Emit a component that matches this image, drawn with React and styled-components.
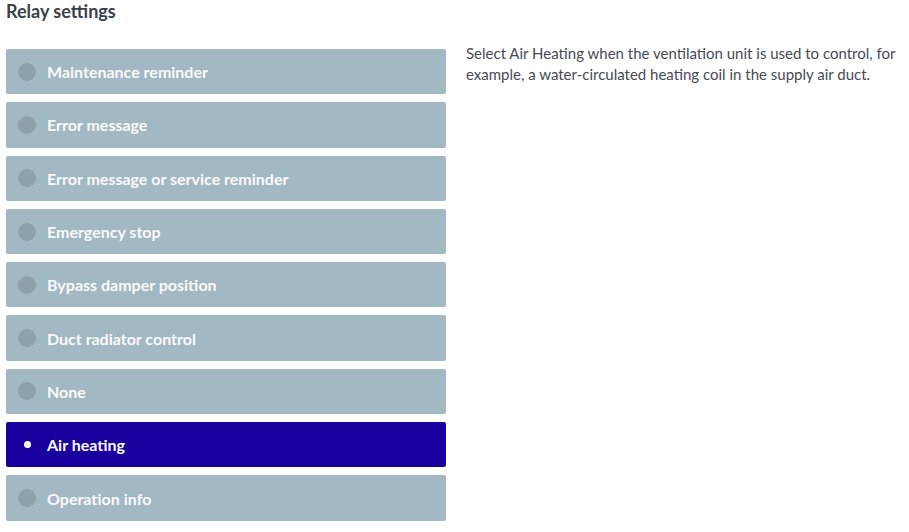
import React, { useState } from 'react';
import styled, { createGlobalStyle } from 'styled-components';

const GlobalStyle = createGlobalStyle`
  body {
    margin: 0;
    background: #fff;
    font-family: Lato, "Noto Sans", sans-serif;
  }
`;

const Page = styled.div`
  padding: 0 6px;
`;

const Title = styled.h2`
  margin: 0;
  font-size: 18px;
  line-height: 22px;
  font-weight: 700;
  color: #3b404c;
`;

const Layout = styled.div`
  display: grid;
  grid-template-columns: 440px 1fr;
  column-gap: 20px;
  margin-top: 27px;
`;

const Options = styled.div`
  display: flex;
  flex-direction: column;
  gap: 8px;
`;

const Option = styled.button`
  display: flex;
  align-items: center;
  height: 45.3px;
  padding: 0 0 0 12px;
  border: none;
  border-radius: 2px;
  background: ${p => (p.$selected ? '#1a009e' : '#a2b8c3')};
  color: #fafafa;
  font-family: inherit;
  font-size: 16px;
  font-weight: 700;
  text-align: left;
  cursor: pointer;
`;

const Dot = styled.span`
  display: flex;
  align-items: center;
  justify-content: center;
  width: 18px;
  height: 18px;
  margin-right: 11px;
  border-radius: 50%;
  background: ${p => (p.$selected ? 'transparent' : '#8ea0aa')};

  &::after {
    content: '';
    display: ${p => (p.$selected ? 'block' : 'none')};
    width: 7px;
    height: 7px;
    border-radius: 50%;
    background: #fff;
  }
`;

const Description = styled.p`
  margin: -6px 0 0;
  font-size: 15px;
  line-height: 21px;
  color: #464b55;
`;

const OPTIONS = [
  'Maintenance reminder',
  'Error message',
  'Error message or service reminder',
  'Emergency stop',
  'Bypass damper position',
  'Duct radiator control',
  'None',
  'Air heating',
  'Operation info',
];

export default function App() {
  const [selected, setSelected] = useState('Air heating');

  return (
    <Page>
      <GlobalStyle />
      <Title>Relay settings</Title>
      <Layout>
        <Options>
          {OPTIONS.map(label => (
            <Option
              key={label}
              $selected={label === selected}
              onClick={() => setSelected(label)}
            >
              <Dot $selected={label === selected} />
              {label}
            </Option>
          ))}
        </Options>
        <Description>
          Select Air Heating when the ventilation unit is used to control, for example, a
          water-circulated heating coil in the supply air duct.
        </Description>
      </Layout>
    </Page>
  );
}
